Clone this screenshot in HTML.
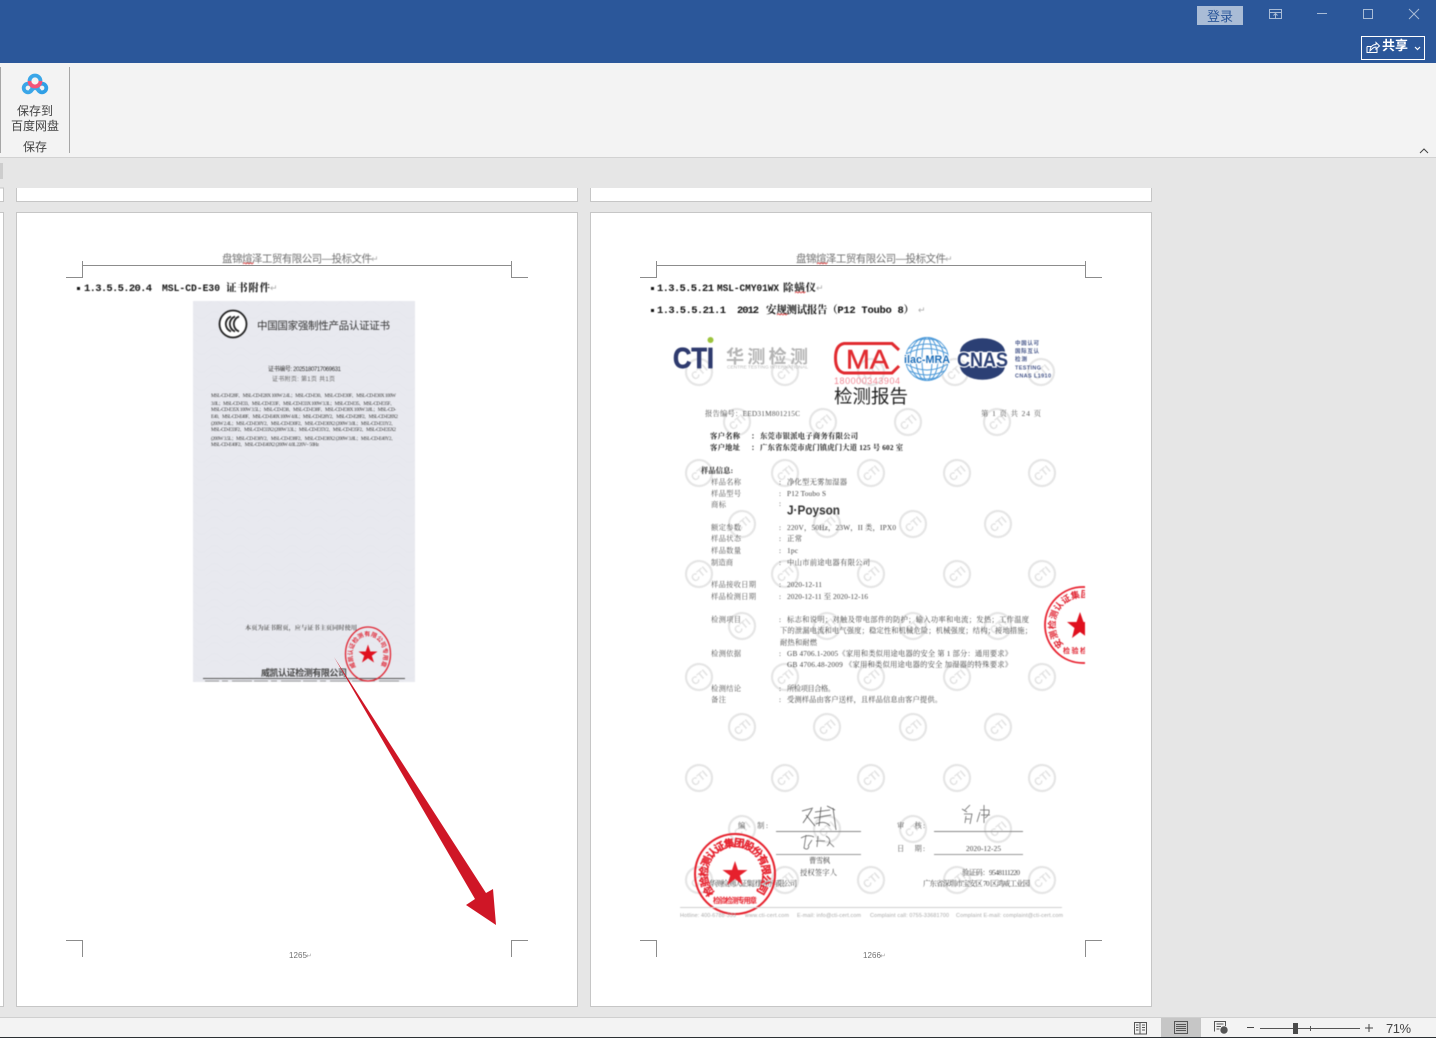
<!DOCTYPE html>
<html lang="zh"><head><meta charset="utf-8"><title>Document</title>
<style>
html,body{margin:0;padding:0;width:1436px;height:1038px;overflow:hidden;background:#e6e6e6}
svg{position:absolute;left:0;top:0}
text{font-family:"Liberation Sans","Noto Sans CJK SC",sans-serif}
.s text,text.s{font-family:"Liberation Serif","Noto Serif CJK SC",serif}
.h{font-size:10.5px;fill:#707070}
.b{font-family:"Liberation Mono","Noto Serif CJK SC",monospace!important;font-weight:700;font-size:10.5px;fill:#111}
.rr{font-size:9px;fill:#aaa}
.soft{filter:blur(.4px)}
.t{font-size:7.3px;fill:#444}
.l{font-size:7.3px;fill:#555}
.d{font-size:7.3px;fill:#222;font-weight:700}
.c{font-size:5px;fill:#3a3a3a}
.wm circle{fill:none;stroke:#e5e5e5;stroke-width:2.2}
.wm text{font-size:11px;font-weight:700;fill:#e3e3e3;text-anchor:middle}
.ft{font-size:5.4px;fill:#a8a8a8}
.crop{stroke:#8c8c8c;stroke-width:1;fill:none}
</style></head><body>
<svg width="1436" height="1038" viewBox="0 0 1436 1038" xmlns="http://www.w3.org/2000/svg">
<defs>
<path id="arcA" d="M715 893A27.500 27.500 0 1 1 755 893"/>
<path id="arcB" d="M1064 645A27.500 27.500 0 0 1 1092 599"/>
<path id="arcC" d="M356 667A15.500 19 0 1 1 380 667"/>
<clipPath id="clipR"><rect x="1030" y="570" width="55" height="110"/></clipPath>
<clipPath id="clipS"><rect x="330" y="610" width="80" height="72"/></clipPath>
<clipPath id="clipI"><circle cx="927" cy="359" r="22"/></clipPath>
<pattern id="gui" width="26" height="18" patternUnits="userSpaceOnUse"><path d="M0 9Q6.500 2 13 9T26 9M0 16Q6.500 9 13 16T26 16" fill="none" stroke="#e3e4eb" stroke-width=".5"/></pattern>
</defs>

<!-- chrome -->
<rect x="0" y="0" width="1436" height="63" fill="#2b579a"/>
<rect x="1197" y="6" width="46" height="19" fill="#a9bcd6"/>
<text x="1220" y="21" font-size="13" fill="#2b579a" text-anchor="middle">登录</text>
<g fill="none" stroke="#a9bcd6" stroke-width="1">
<rect x="1269.5" y="9.5" width="12" height="9"/><path d="M1269.5 12.5H1281.5M1275.5 18V14M1273.5 15.5L1275.5 13.5L1277.5 15.5"/>
<path d="M1317 13.5H1327"/>
<rect x="1363.5" y="9.500" width="9" height="9"/>
<path d="M1409 9L1419 19M1419 9L1409 19"/>
</g>
<rect x="1361.500" y="36.500" width="63" height="23" fill="none" stroke="#fff"/>
<path d="M1367 46.500V52.500H1377V48M1367 46.500L1371 46.500M1370 51C1370 46.500 1373 44.500 1376 44.500V42.500L1379.500 46L1376 49V47C1374 47 1372 48.500 1370 51Z" fill="none" stroke="#fff" stroke-width="1"/>
<text x="1382" y="50" font-size="13" font-weight="700" fill="#fff" textLength="26" lengthAdjust="spacingAndGlyphs">共享</text>
<path d="M1415 47L1417.500 49.500L1420 47" fill="none" stroke="#fff" stroke-width="1.200"/>

<rect x="0" y="63" width="1436" height="94" fill="#f3f3f3"/>
<rect x="0" y="157" width="1436" height="1" fill="#d2d2d2"/>
<rect x="0" y="67" width="1" height="86" fill="#a6a6a6"/>
<rect x="69" y="67" width="1" height="86" fill="#a6a6a6"/>
<g fill="none" stroke-width="3.800">
<circle cx="28" cy="88" r="4.300" stroke="#3aa6e8"/>
<circle cx="42" cy="88" r="4.300" stroke="#2f9fe6"/>
<path d="M30 91L35 87.500L40 91" stroke="#3aa6e8"/>
<path d="M29.500 81A5.500 5.500 0 0 1 40.500 81" stroke="#3aa6e8"/>
<path d="M40.500 81A5.500 5.500 0 0 1 29.500 81" stroke="#f2547a"/>
</g>
<text x="17" y="115" font-size="12" fill="#444" textLength="36">保存到</text>
<text x="11" y="130" font-size="12" fill="#444" textLength="48">百度网盘</text>
<text x="23" y="151" font-size="12" fill="#444" textLength="24">保存</text>
<path d="M1420 153L1424 149L1428 153" fill="none" stroke="#444" stroke-width="1"/>
<rect x="0" y="163" width="3" height="16" fill="#cdcdcd"/>

<!-- pages -->
<g fill="#fff" stroke="#c6c6c6" stroke-width="1">
<path d="M-2 188H3.500V201.500H-2Z"/><path d="M-2 212.500H3.500V1006.500H-2Z"/>
<path d="M16.500 188V201.500H577.500V188"/><path d="M590.500 188V201.500H1151.500V188"/>
<rect x="16.500" y="212.500" width="561" height="794"/>
<rect x="590.500" y="212.500" width="561" height="794"/>
</g>

<!-- crop marks -->
<path class="crop" d="M82.500 261V265.500H511.500V261M82.500 265V277.500H66M511.500 265V277.500H528M66 940.500H82.500V957M528 940.500H511.500V957"/>
<path class="crop" d="M656.500 261V265.500H1085.500V261M656.500 265V277.500H640M1085.500 265V277.500H1102M640 940.500H656.500V957M1102 940.500H1085.500V957"/>

<!-- left page -->
<g class="soft">
<text class="h" x="222" y="262" textLength="150">盘锦煊泽工贸有限公司—投标文件</text><text class="rr" x="371" y="262">↵</text>
<path d="M243 264l1.500-1.300 1.500 1.300 1.500-1.300 1.500 1.300 1.500-1.300 1.500 1.300 1.500-1.300" fill="none" stroke="#d33" stroke-width=".8"/>
<rect x="77" y="287" width="3" height="3" fill="#111"/>
<text class="b" x="84" y="291" textLength="68">1.3.5.5.20.4</text>
<text class="b" x="162" y="291" textLength="58" lengthAdjust="spacingAndGlyphs" font-size="10">MSL-CD-E30</text>
<text class="b" x="226" y="291" textLength="44">证书附件</text><text class="rr" x="270" y="291">↵</text>

<rect x="193" y="301" width="222" height="381" fill="#e8e9ef"/>
<rect x="193" y="301" width="222" height="381" fill="url(#gui)"/>
<circle cx="233" cy="324" r="13.500" fill="#fff" stroke="#222" stroke-width="1.800"/>
<path d="M231 316.500A8 8 0 0 0 231 331.500M235 316.500A8 8 0 0 0 235 331.500M239 316.500A8 8 0 0 0 239 331.500" fill="none" stroke="#222" stroke-width="1.800"/>
<text x="257" y="329" font-size="10.500" fill="#333" textLength="133">中国国家强制性产品认证证书</text>
<text x="268" y="371" font-size="6" fill="#333" textLength="73">证书编号: 2025180717069631</text>
<text x="272" y="381" font-size="6" fill="#666" textLength="63">证书附页: 第1页 共1页</text>
<g class="s">
<text class="c" x="211" y="397" textLength="185">MSL-CD-E28F、MSL-CD-E28X 100W 2.4L；MSL-CD-E30、MSL-CD-E30F、MSL-CD-E30X 100W</text>
<text class="c" x="211" y="405" textLength="184">3.0L；MSL-CD-E33、MSL-CD-E33F、MSL-CD-E33X 100W 3.3L；MSL-CD-E35、MSL-CD-E35F、</text>
<text class="c" x="211" y="411" textLength="185">MSL-CD-E35X 100W 3.5L；MSL-CD-E38、MSL-CD-E38F、MSL-CD-E38X 100W 3.8L；MSL-CD-</text>
<text class="c" x="211" y="418" textLength="187">E40、MSL-CD-E40F、MSL-CD-E40X 100W 4.0L；MSL-CD-E28Y2、MSL-CD-E28F2、MSL-CD-E28X2</text>
<text class="c" x="211" y="425" textLength="185">(200W 2.4L；MSL-CD-E30Y2、MSL-CD-E30F2、MSL-CD-E30X2 (200W 3.0L；MSL-CD-E33Y2、</text>
<text class="c" x="211" y="431" textLength="185">MSL-CD-E33F2、MSL-CD-E33X2 (200W 3.3L；MSL-CD-E35Y2、MSL-CD-E35F2、MSL-CD-E35X2</text>
<text class="c" x="211" y="440" textLength="185">(200W 3.5L；MSL-CD-E38Y2、MSL-CD-E38F2、MSL-CD-E38X2 (200W 3.8L；MSL-CD-E40Y2、</text>
<text class="c" x="211" y="446" textLength="108">MSL-CD-E40F2、MSL-CD-E40X2 (200W 4.0L 220V~ 50Hz</text>
<text x="245" y="630" font-size="6.200" fill="#666" textLength="112" font-weight="700">本页为证书附页，应与证书主页同时使用</text>
</g>
<text x="261" y="676" font-size="9" font-weight="700" fill="#444" textLength="86">威凯认证检测有限公司</text>
<rect x="203" y="678" width="202" height="1" fill="#555"/>
<path d="M205 681H400" stroke="#999" stroke-width="1" stroke-dasharray="14 3 6 4 20 2"/>
<g clip-path="url(#clipS)">
<ellipse cx="368" cy="654" rx="22.500" ry="27" fill="none" stroke="#e0202e" stroke-width="1.300"/>
<text font-size="6" font-weight="700" fill="#e0303e"><textPath href="#arcC" textLength="78">威凯认证检测有限公司专用章</textPath></text>
<path d="M368 644.500L370.300 651.500H377.500L371.800 655.700L374 662.500L368 658.300L362 662.500L364.200 655.700L358.500 651.500H365.700Z" fill="#e0101e"/>
</g>
</g>
<text class="h" x="289" y="958" style="font-size:8px" textLength="18">1265</text><text class="rr" x="306" y="958" style="font-size:7px">↵</text>
<path d="M334 657L475 899L466 905L496 925L493 889L486 893Z" fill="#cf1626"/>

<!-- right page -->
<g class="soft">
<text class="h" x="796" y="262" textLength="150">盘锦煊泽工贸有限公司—投标文件</text><text class="rr" x="945" y="262">↵</text>
<path d="M817 264l1.500-1.300 1.500 1.300 1.500-1.300 1.500 1.300 1.500-1.300 1.500 1.300 1.500-1.300" fill="none" stroke="#d33" stroke-width=".8"/>
<rect x="651" y="287" width="3" height="3" fill="#111"/>
<text class="b" x="657" y="291" textLength="57">1.3.5.5.21</text>
<text class="b" x="717" y="291" textLength="62" lengthAdjust="spacingAndGlyphs">MSL-CMY01WX</text>
<text class="b" x="783" y="291" textLength="33">除螨仪</text><text class="rr" x="816" y="291">↵</text>
<path d="M795 293l1.500-1.300 1.500 1.300 1.500-1.300 1.500 1.300 1.500-1.300 1.500 1.300 1.500-1.300" fill="none" stroke="#d33" stroke-width=".8"/>
<rect x="651" y="309" width="3" height="3" fill="#111"/>
<text class="b" x="657" y="313" textLength="69">1.3.5.5.21.1</text>
<text class="b" x="737" y="313" textLength="22">2012</text>
<text class="b" x="766" y="313" textLength="148">安规测试报告（P12 Toubo 8）</text><text class="rr" x="918" y="313">↵</text>
<path d="M777 315l1.500-1.300 1.500 1.300 1.500-1.300 1.500 1.300 1.500-1.300 1.500 1.300 1.500-1.300" fill="none" stroke="#d33" stroke-width=".8"/>

<g class="wm">
<g transform="translate(699 372) rotate(-40)"><circle r="13"/><text y="4">CTI</text></g>
<g transform="translate(785 372) rotate(-40)"><circle r="13"/><text y="4">CTI</text></g>
<g transform="translate(871 372) rotate(-40)"><circle r="13"/><text y="4">CTI</text></g>
<g transform="translate(955 372) rotate(-40)"><circle r="13"/><text y="4">CTI</text></g>
<g transform="translate(1041 372) rotate(-40)"><circle r="13"/><text y="4">CTI</text></g>
<g transform="translate(737 422) rotate(-40)"><circle r="13"/><text y="4">CTI</text></g>
<g transform="translate(823 422) rotate(-40)"><circle r="13"/><text y="4">CTI</text></g>
<g transform="translate(908 422) rotate(-40)"><circle r="13"/><text y="4">CTI</text></g>
<g transform="translate(997 422) rotate(-40)"><circle r="13"/><text y="4">CTI</text></g>
<g transform="translate(699 473) rotate(-40)"><circle r="13"/><text y="4">CTI</text></g>
<g transform="translate(785 473) rotate(-40)"><circle r="13"/><text y="4">CTI</text></g>
<g transform="translate(871 473) rotate(-40)"><circle r="13"/><text y="4">CTI</text></g>
<g transform="translate(957 473) rotate(-40)"><circle r="13"/><text y="4">CTI</text></g>
<g transform="translate(1042 473) rotate(-40)"><circle r="13"/><text y="4">CTI</text></g>
<g transform="translate(742 524) rotate(-40)"><circle r="13"/><text y="4">CTI</text></g>
<g transform="translate(827 524) rotate(-40)"><circle r="13"/><text y="4">CTI</text></g>
<g transform="translate(913 524) rotate(-40)"><circle r="13"/><text y="4">CTI</text></g>
<g transform="translate(998 524) rotate(-40)"><circle r="13"/><text y="4">CTI</text></g>
<g transform="translate(699 574) rotate(-40)"><circle r="13"/><text y="4">CTI</text></g>
<g transform="translate(785 574) rotate(-40)"><circle r="13"/><text y="4">CTI</text></g>
<g transform="translate(871 574) rotate(-40)"><circle r="13"/><text y="4">CTI</text></g>
<g transform="translate(957 574) rotate(-40)"><circle r="13"/><text y="4">CTI</text></g>
<g transform="translate(1042 574) rotate(-40)"><circle r="13"/><text y="4">CTI</text></g>
<g transform="translate(742 626) rotate(-40)"><circle r="13"/><text y="4">CTI</text></g>
<g transform="translate(827 626) rotate(-40)"><circle r="13"/><text y="4">CTI</text></g>
<g transform="translate(913 626) rotate(-40)"><circle r="13"/><text y="4">CTI</text></g>
<g transform="translate(998 626) rotate(-40)"><circle r="13"/><text y="4">CTI</text></g>
<g transform="translate(699 677) rotate(-40)"><circle r="13"/><text y="4">CTI</text></g>
<g transform="translate(785 677) rotate(-40)"><circle r="13"/><text y="4">CTI</text></g>
<g transform="translate(871 677) rotate(-40)"><circle r="13"/><text y="4">CTI</text></g>
<g transform="translate(957 677) rotate(-40)"><circle r="13"/><text y="4">CTI</text></g>
<g transform="translate(1042 677) rotate(-40)"><circle r="13"/><text y="4">CTI</text></g>
<g transform="translate(742 727) rotate(-40)"><circle r="13"/><text y="4">CTI</text></g>
<g transform="translate(827 727) rotate(-40)"><circle r="13"/><text y="4">CTI</text></g>
<g transform="translate(913 727) rotate(-40)"><circle r="13"/><text y="4">CTI</text></g>
<g transform="translate(998 727) rotate(-40)"><circle r="13"/><text y="4">CTI</text></g>
<g transform="translate(699 778) rotate(-40)"><circle r="13"/><text y="4">CTI</text></g>
<g transform="translate(785 778) rotate(-40)"><circle r="13"/><text y="4">CTI</text></g>
<g transform="translate(871 778) rotate(-40)"><circle r="13"/><text y="4">CTI</text></g>
<g transform="translate(957 778) rotate(-40)"><circle r="13"/><text y="4">CTI</text></g>
<g transform="translate(1042 778) rotate(-40)"><circle r="13"/><text y="4">CTI</text></g>
<g transform="translate(742 829) rotate(-40)"><circle r="13"/><text y="4">CTI</text></g>
<g transform="translate(827 829) rotate(-40)"><circle r="13"/><text y="4">CTI</text></g>
<g transform="translate(913 829) rotate(-40)"><circle r="13"/><text y="4">CTI</text></g>
<g transform="translate(998 829) rotate(-40)"><circle r="13"/><text y="4">CTI</text></g>
<g transform="translate(699 880) rotate(-40)"><circle r="13"/><text y="4">CTI</text></g>
<g transform="translate(785 880) rotate(-40)"><circle r="13"/><text y="4">CTI</text></g>
<g transform="translate(871 880) rotate(-40)"><circle r="13"/><text y="4">CTI</text></g>
<g transform="translate(957 880) rotate(-40)"><circle r="13"/><text y="4">CTI</text></g>
<g transform="translate(1042 880) rotate(-40)"><circle r="13"/><text y="4">CTI</text></g>
</g>

<!-- logos -->
<text x="673" y="368" font-size="29" font-weight="700" fill="#2e3a6e" stroke="#2e3a6e" stroke-width=".7" textLength="41" lengthAdjust="spacingAndGlyphs">CTI</text>
<circle cx="710.500" cy="340" r="3" fill="#9cc43c"/>
<text x="726" y="363" font-size="18" font-weight="700" fill="#b4b4b4" textLength="82">华测检测</text>
<text x="727" y="368.500" font-size="4.800" fill="#b8b8b8" textLength="81">CENTRE TESTING INTERNATIONAL</text>
<path d="M899 350L892 343.500H844Q835.500 345 835.500 358Q835.500 371 844 373H892L899 366" fill="none" stroke="#e12a2f" stroke-width="3"/>
<text x="846" y="368.500" font-size="27" fill="#e12a2f" stroke="#e12a2f" stroke-width=".4" textLength="43" lengthAdjust="spacingAndGlyphs">MA</text>
<text x="834" y="384" font-size="9" fill="#f18a96" textLength="66">180000343904</text>
<g clip-path="url(#clipI)" fill="none" stroke="#4a98d8" stroke-width="1">
<circle cx="927" cy="359" r="21.500"/>
<path d="M904 346Q927 332 950 346M904 342Q927 330 950 342M906 350Q927 338 948 350M906 354Q927 343 948 354M904 368Q927 382 950 368M904 372Q927 386 950 372M906 364Q927 376 948 364"/>
<ellipse cx="927" cy="359" rx="5" ry="22"/><ellipse cx="927" cy="359" rx="11" ry="22"/><ellipse cx="927" cy="359" rx="17" ry="22"/>
</g>
<text x="904" y="363" font-size="11" font-weight="700" fill="#1a6cb8" stroke="#fff" stroke-width="2" paint-order="stroke" textLength="46" lengthAdjust="spacingAndGlyphs">ilac-MRA</text>
<path d="M960 352A22 13.500 0 0 1 1005 352ZM960 366A22 13.500 0 0 0 1005 366Z" fill="#2b3f74"/>
<text x="957" y="366.500" font-size="20" font-weight="700" fill="#2b3f74" stroke="#fff" stroke-width="2.200" paint-order="stroke" textLength="51" lengthAdjust="spacingAndGlyphs">CNAS</text>
<g font-size="5.500" font-weight="700" fill="#46568a">
<text x="1015" y="345" textLength="24">中国认可</text>
<text x="1015" y="353" textLength="24">国际互认</text>
<text x="1015" y="361" textLength="12">检测</text>
<text x="1015" y="369.500" textLength="26">TESTING</text>
<text x="1015" y="377.500" textLength="36">CNAS L1910</text>
</g>
<text x="834" y="403" font-size="18.500" fill="#222" textLength="74">检测报告</text>

<!-- report body -->
<g class="s">
<text class="l" x="705" y="416" textLength="95">报告编号：EED31M801215C</text>
<text class="l" x="981" y="416" textLength="60">第 1 页 共 24 页</text>
<text class="d" x="710" y="438.500" textLength="30">客户名称</text><text class="d" x="751" y="438.500">：</text>
<text class="d" x="760" y="438.500" textLength="98">东莞市银派电子商务有限公司</text>
<text class="d" x="710" y="450" textLength="30">客户地址</text><text class="d" x="751" y="450">：</text>
<text class="d" x="760" y="450" textLength="143">广东省东莞市虎门镇虎门大道 125 号 602 室</text>
<text class="d" x="701" y="473" textLength="32">样品信息:</text>
<text class="l" x="711" y="484.500" textLength="30">样品名称</text><text class="t" x="779" y="484.500">:</text><text class="t" x="787" y="484.500" textLength="60">净化型无雾加湿器</text>
<text class="l" x="711" y="496" textLength="30">样品型号</text><text class="t" x="779" y="496">:</text><text class="t" x="787" y="496" textLength="39">P12 Toubo S</text>
<text class="l" x="711" y="507" textLength="15">商标</text><text class="t" x="779" y="506">:</text>
<text class="l" x="711" y="530" textLength="30">额定参数</text><text class="t" x="779" y="530">:</text><text class="t" x="787" y="530" textLength="109">220V，50Hz，23W，II 类，IPX0</text>
<text class="l" x="711" y="541" textLength="30">样品状态</text><text class="t" x="779" y="541">:</text><text class="t" x="787" y="541" textLength="15">正常</text>
<text class="l" x="711" y="553" textLength="30">样品数量</text><text class="t" x="779" y="553">:</text><text class="t" x="787" y="553" textLength="11">1pc</text>
<text class="l" x="711" y="565" textLength="22">制造商</text><text class="t" x="779" y="565">:</text><text class="t" x="787" y="565" textLength="83">中山市前途电器有限公司</text>
<text class="l" x="711" y="587" textLength="45">样品接收日期</text><text class="t" x="779" y="587">:</text><text class="t" x="787" y="587" textLength="35">2020-12-11</text>
<text class="l" x="711" y="599" textLength="45">样品检测日期</text><text class="t" x="779" y="599">:</text><text class="t" x="787" y="599" textLength="81">2020-12-11 至 2020-12-16</text>
<text class="l" x="711" y="622" textLength="30">检测项目</text><text class="t" x="779" y="622">:</text><text class="t" x="787" y="622" textLength="242">标志和说明；对触及带电部件的防护；输入功率和电流；发热；工作温度</text>
<text class="t" x="780" y="633" textLength="252">下的泄漏电流和电气强度；稳定性和机械危险；机械强度；结构；接地措施；</text>
<text class="t" x="780" y="645" textLength="37">耐热和耐燃</text>
<text class="l" x="711" y="656" textLength="30">检测依据</text><text class="t" x="779" y="656">:</text><text class="t" x="787" y="656" textLength="225">GB 4706.1-2005《家用和类似用途电器的安全 第 1 部分：通用要求》</text>
<text class="t" x="787" y="667" textLength="225">GB 4706.48-2009 《家用和类似用途电器的安全 加湿器的特殊要求》</text>
<text class="l" x="711" y="691" textLength="30">检测结论</text><text class="t" x="779" y="691">:</text><text class="t" x="787" y="691" textLength="48">所检项目合格。</text>
<text class="l" x="711" y="702" textLength="15">备注</text><text class="t" x="779" y="702">:</text><text class="t" x="787" y="702" textLength="155">受测样品由客户送样，且样品信息由客户提供。</text>
</g>
<text x="787" y="514.500" font-size="12.500" font-weight="700" fill="#333" textLength="53" lengthAdjust="spacingAndGlyphs">J·Poyson</text>

<g clip-path="url(#clipR)">
<circle cx="1083" cy="625" r="38" fill="none" stroke="#e8202e" stroke-width="1.800"/>
<text font-size="9" font-weight="700" fill="#e0202e"><textPath href="#arcB">安测检测认证集团</textPath></text>
<path d="M1080 612L1083.500 622H1093L1085.500 628L1088 638L1080 632L1072 638L1074.500 628L1067 622H1076.500Z" fill="#e0101e"/>
<text x="1063" y="653" font-size="7" font-weight="700" fill="#e0202e" textLength="24">检验检</text>
</g>

<!-- signatures -->
<g class="s">
<text class="l" x="738" y="828" textLength="30">编 &#160; 制:</text>
<text class="l" x="897" y="828" textLength="28">审 &#160; 核:</text>
<text class="l" x="897" y="851" textLength="28">日 &#160; 期:</text>
<text class="t" x="966" y="851" textLength="35">2020-12-25</text>
<text class="t" x="809" y="863" textLength="21">曹雪枫</text>
<text class="t" x="800" y="875" textLength="37">授权签字人</text>
<text class="t" x="962" y="875" textLength="58">验证码：9548111220</text>
<text class="t" x="923" y="886" textLength="107">广东省深圳市宝安区 70 区鸿威工业园</text>
<text class="t" x="709" y="886" textLength="88">华测检测认证集团股份有限公司</text>
</g>
<rect x="776" y="831" width="85" height="1" fill="#888"/>
<rect x="776" y="854" width="85" height="1" fill="#999"/>
<rect x="934" y="831" width="89" height="1" fill="#888"/>
<rect x="934" y="854" width="89" height="1" fill="#999"/>
<path d="M802 811L813 808M803 823Q808 816 812 809M806 815L815 826M815 812L830 810M821 807L819 826M814 818L831 815M816 824Q825 820 830 826M827 806L835 810M833 808L836 830" fill="none" stroke="#555" stroke-width=".8"/>
<path d="M801 838Q808 834 814 837M806 835L804 848Q808 851 809 846M812 840L808 846M818 836L817 847M816 841H825M826 836Q833 840 827 846M829 842L834 847" fill="none" stroke="#666" stroke-width=".8"/>
<path d="M962 809L967 812M970 805L965 810M964 814H972L970 824M966 816L965 823M966 819H970M980 812L977 822M980 810H989Q990 815 985 818M984 805L984 823M981 815H990" fill="none" stroke="#666" stroke-width=".8"/>

<circle cx="735" cy="874" r="40" fill="none" stroke="#e6202c" stroke-width="2"/>
<text font-size="10.500" font-weight="700" fill="#e6202c" stroke="#e6202c" stroke-width=".3"><textPath href="#arcA" textLength="126">检验检测认证集团股份有限公司</textPath></text>
<path d="M735 861L738 870H747.500L739.800 875.600L742.700 885L735 879L727.300 885L730.200 875.600L722.500 870H732Z" fill="#e6202c"/>
<text x="713" y="903" font-size="7.200" font-weight="700" fill="#e6202c" textLength="44">检验检测专用章</text>

<rect x="680" y="907" width="382" height="1" fill="#d0d0d0"/>
<text class="ft" x="680" y="917" textLength="56">Hotline: 400-6788-333</text>
<text class="ft" x="745" y="917" textLength="44">www.cti-cert.com</text>
<text class="ft" x="797" y="917" textLength="64">E-mail: info@cti-cert.com</text>
<text class="ft" x="870" y="917" textLength="79">Complaint call: 0755-33681700</text>
<text class="ft" x="956" y="917" textLength="107">Complaint E-mail: complaint@cti-cert.com</text>
</g>
<text class="h" x="863" y="958" style="font-size:8px" textLength="18">1266</text><text class="rr" x="880" y="958" style="font-size:7px">↵</text>

<!-- status bar -->
<rect x="0" y="1017" width="1436" height="1" fill="#cfcfcf"/>
<rect x="0" y="1018" width="1436" height="19" fill="#f3f3f3"/>
<rect x="0" y="1037" width="1436" height="1" fill="#2a2f33"/>
<rect x="1161" y="1018" width="40" height="19" fill="#c6c6c6"/>
<g fill="none" stroke="#555" stroke-width="1">
<path d="M1134.500 1022.500H1140V1034H1134.500ZM1140 1022.500H1146.500V1034H1140ZM1136 1025H1138.500M1136 1027.500H1138.500M1136 1030H1138.500M1142 1025H1145M1142 1027.500H1145M1142 1030H1145"/>
<rect x="1174.500" y="1021.500" width="13" height="12"/>
<path d="M1176 1024.500H1186M1176 1026.500H1186M1176 1028.500H1186M1176 1030.500H1186"/>
<path d="M1214.500 1031.500V1021.500H1225.500V1026M1216.500 1024H1223.500M1216.500 1026.500H1221M1216.500 1029H1219.500"/>
</g>
<circle cx="1224" cy="1030" r="3.700" fill="#555"/>
<rect x="1247" y="1027" width="7" height="1" fill="#444"/>
<rect x="1260" y="1028" width="100" height="1" fill="#555"/>
<rect x="1293" y="1023" width="5" height="11" fill="#4a4a4a"/>
<rect x="1310" y="1026" width="1" height="5" fill="#555"/>
<path d="M1365 1028H1373M1369 1024V1032" stroke="#444" stroke-width="1" fill="none"/>
<text x="1386" y="1033" font-size="13" fill="#444" textLength="25">71%</text>
</svg>
</body></html>
